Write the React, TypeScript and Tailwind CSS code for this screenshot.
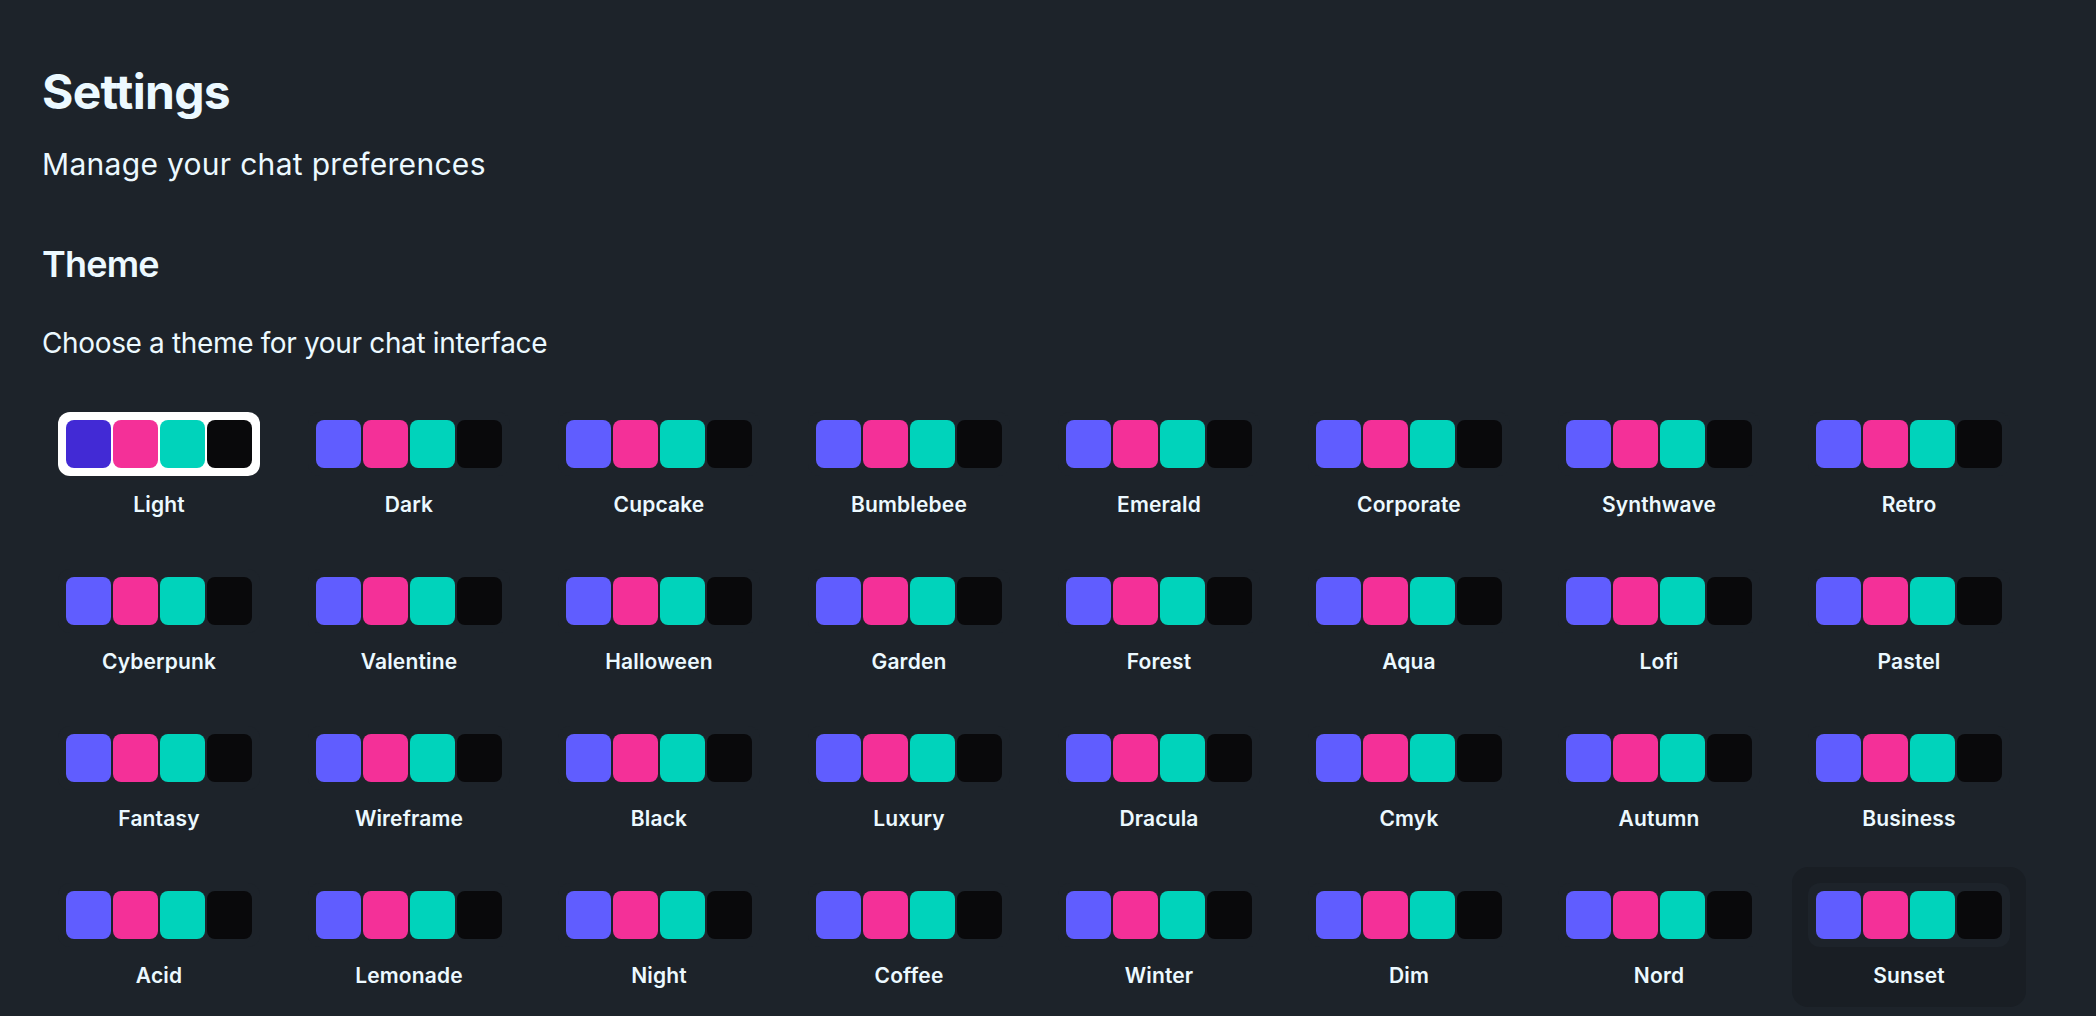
const themes = [
  'Light', 'Dark', 'Cupcake', 'Bumblebee', 'Emerald', 'Corporate', 'Synthwave', 'Retro',
  'Cyberpunk', 'Valentine', 'Halloween', 'Garden', 'Forest', 'Aqua', 'Lofi', 'Pastel',
  'Fantasy', 'Wireframe', 'Black', 'Luxury', 'Dracula', 'Cmyk', 'Autumn', 'Business',
  'Acid', 'Lemonade', 'Night', 'Coffee', 'Winter', 'Dim', 'Nord', 'Sunset',
];

function ThemeCard({ name, selected, hovered }: { name: string; selected: boolean; hovered: boolean }) {
  return (
    <button
      className={`flex flex-col items-center rounded-2xl px-4 pt-4 pb-[17px] ${hovered ? 'bg-[#191e24]' : ''}`}
    >
      <div className={`flex gap-[2px] rounded-xl p-2 ${selected ? 'bg-white' : 'bg-[#1d232a]'}`}>
        <div className={`h-[48px] w-[45px] rounded-lg ${selected ? 'bg-[#422ad5]' : 'bg-[#605dff]'}`} />
        <div className="h-[48px] w-[45px] rounded-lg bg-[#f43098]" />
        <div className="h-[48px] w-[45px] rounded-lg bg-[#00d3bb]" />
        <div className="h-[48px] w-[45px] rounded-lg bg-[#09090b]" />
      </div>
      <span className="mt-[15px] text-[21px] leading-[28px] font-semibold tracking-[0.15px]">{name}</span>
    </button>
  );
}

export default function App() {
  return (
    <div className="h-screen overflow-hidden bg-[#1d232a] text-[#ecf9ff] px-[42px] pt-[62px] font-['Inter',sans-serif]">
      <h1 className="text-[48px] leading-[60px] font-bold tracking-[-0.7px]">Settings</h1>
      <p className="mt-[20px] text-[30px] leading-[45px] tracking-[0.3px]">Manage your chat preferences</p>

      <h2 className="mt-[53px] text-[36px] leading-[48px] font-semibold tracking-[-0.8px]">Theme</h2>
      <p className="mt-[34px] text-[28px] leading-[42px] tracking-[-0.35px]">Choose a theme for your chat interface</p>

      <div className="mt-[32px] grid grid-cols-[repeat(8,234px)] gap-x-4 gap-y-[17px]">
        {themes.map((t) => (
          <ThemeCard key={t} name={t} selected={t === 'Light'} hovered={t === 'Sunset'} />
        ))}
      </div>
    </div>
  );
}
